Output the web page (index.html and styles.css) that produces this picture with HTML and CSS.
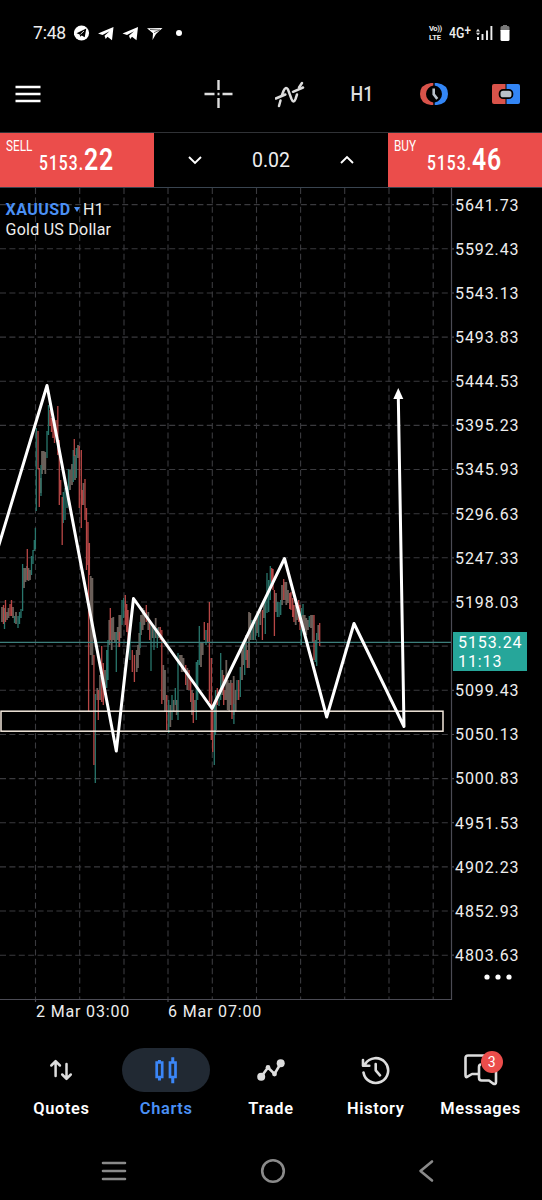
FILE: index.html
```html
<!DOCTYPE html>
<html lang="en">
<head>
    <meta charset="UTF-8">
    <meta name="viewport" content="width=device-width, initial-scale=1.0">
    <title>XAUUSD Chart</title>
    <link rel="stylesheet" href="styles.css">
</head>
<body>
    <header class="status-bar">
        <span class="clock">7:48</span>
        <svg class="status-icons" width="108" height="18" viewBox="0 0 108 18">
            <circle cx="7.5" cy="9" r="7.6" fill="#fff"/>
            <path d="M2.5 9.2 12.3 4.5 10.7 13.3 7.7 11.4 6.2 12.8 5.7 10.4Z" fill="#000"/>
            <path d="m6.5 10.3 3.5-3.3" stroke="#fff" stroke-width=".8"/>
            <path d="M24 9.6 39.5 3 38 16.2 33.5 12.7 31.7 15 30.5 11.7 35.5 7.2 28.5 11Z" fill="#fff"/>
            <path d="M48.5 9.6 64 3 62.5 16.2 58 12.7 56.2 15 55 11.7 60 7.2 53 11Z" fill="#fff"/>
            <path d="M73 4.2 88.5 4 82 10 78.5 16 79 9.3Z" fill="#fff"/>
            <path d="m76 5.5 10 .5-6 2.6" fill="none" stroke="#555" stroke-width=".9"/>
            <circle cx="105" cy="9" r="3" fill="#fff"/>
        </svg>
        <div class="signal">
            <span class="volte"><span>Vo))</span><span>LTE</span></span>
            <span class="network">4G<sup>+</sup></span>
            <svg width="17" height="16" viewBox="0 0 17 16">
                <path d="M6.5 9v6M11 5.5V15M15.4 1v14" stroke="#eee" stroke-width="1.9"/>
                <path d="M2 12v3" stroke="#eee" stroke-width="2"/>
                <path d="m0 6.500 2-2.800 2 2.800ZM0 7.800h4l-2 2.800Z" fill="#ddd"/>
            </svg>
            <svg width="10" height="18" viewBox="0 0 10 18">
                <path d="M3 1h4v1h1q1.5 0 1.5 1.5V7h-9V3.5Q.5 2 2 2h1Z" fill="#777"/>
                <path d="M.5 6h9v9.5Q9.5 17 8 17H2Q.5 17 .5 15.5Z" fill="#fff"/>
            </svg>
        </div>
    </header>

    <nav class="toolbar">
        <svg class="menu" width="26" height="20" viewBox="0 0 26 20">
            <path d="M.5 3h25M.5 10h25M.5 17h25" stroke="#fff" stroke-width="2.7"/>
        </svg>
        <div class="tools">
            <svg width="30" height="30" viewBox="0 0 30 30">
                <path d="M15.500 1v10M15.500 19v10M1.500 15h10M19.500 15h10M14.500 15h2" stroke="#ddd" stroke-width="2.4"/>
            </svg>
            <svg width="30" height="30" viewBox="0 0 30 30" fill="none" stroke="#ddd" stroke-width="2.5" stroke-linecap="round">
                <path d="M4 27 5.500 21.500M7 16 8.500 12Q10.500 7 13 10.500L16.500 20Q18.500 25 20.500 20L22 15.500M24 8.500 27 4"/>
                <path d="m.8 19.500 9.500-4M18 12.800l10-4.300"/>
            </svg>
            <span class="timeframe">H1</span>
            <svg width="30" height="30" viewBox="0 0 30 30">
                <path d="M14.300 4H12Q1 5.500 1 15T12 26h2.300V23.500A8.600 8.600 0 0 1 14.300 6.500Z" fill="#d9534a"/>
                <path d="M15.700 4H18Q29 5.500 29 15T18 26h-2.300V23.500A8.600 8.600 0 0 0 15.700 6.500Z" fill="#3386f6"/>
                <path d="M14.700 9.500v5.700l3.600 4.700" fill="none" stroke="#b9c2ca" stroke-width="2.6"/>
            </svg>
            <svg width="30" height="30" viewBox="0 0 30 30">
                <path d="M3 5h11.500v20H3Q1 25 1 23V7Q1 5 3 5Z" fill="#d9534a"/>
                <path d="M15.500 5H27q2 0 2 2v16q0 2-2 2H15.500Z" fill="#3386f6"/>
                <rect x="8.600" y="10.800" width="12.800" height="8.400" rx="3.500" fill="#b9c2ca" stroke="#000" stroke-width="1.8"/>
            </svg>
        </div>
    </nav>

    <section class="trade-panel">
        <div class="quote sell">
            <span class="side">SELL</span>
            <span class="price">5153.<b>22</b></span>
        </div>
        <div class="volume">
            <svg width="16" height="10" viewBox="0 0 16 10"><path d="m2 2 6 6 6-6"/></svg>
            <span>0.02</span>
            <svg width="16" height="10" viewBox="0 0 16 10"><path d="m2 8 6-6 6 6"/></svg>
        </div>
        <div class="quote buy">
            <span class="side">BUY</span>
            <span class="price">5153.<b>46</b></span>
        </div>
    </section>

    <main class="chart">
        <div class="plot">
            <svg class="canvas" width="454" height="814" viewBox="0 188 454 814">
                <!-- grid -->
                <path class="grid" d="M35.500 188V999M79.700 188V999M124 188V999M168 188V999M212.300 188V999M256.500 188V999M300.600 188V999M344.700 188V999M389 188V999M433.200 188V999"/>
                <path class="grid" d="M0 204.600H451M0 248.800H451M0 293H451M0 337.100H451M0 381.300H451M0 425.400H451M0 469.500H451M0 513.700H451M0 557.800H451M0 602H451M0 646.100H451M0 690.300H451M0 734.500H451M0 778.600H451M0 822.700H451M0 866.900H451M0 911H451M0 955.200H451"/>
                <path class="ticks" d="M451.500 204.600h3M451.500 248.800h3M451.500 293h3M451.500 337.100h3M451.500 381.300h3M451.500 425.400h3M451.500 469.500h3M451.500 513.700h3M451.500 557.800h3M451.500 602h3M451.500 690.300h3M451.500 734.500h3M451.500 778.600h3M451.500 822.700h3M451.500 866.900h3M451.500 911h3M451.500 955.200h3M35.500 999v3M168 999v3"/>
                <path class="frame" d="M451.500 188V999.500H0"/>

                <!-- price bars -->
                <path class="bar mixed" d="M2 607V622M7 612V620M8.500 608V618M13 607V618M16 612V624M24 568V588M25.500 568V582M28.500 568V581M30 570V580M40.700 478V493M42 451V474M43.700 451V470M45.300 452V474M70 470V490M72 464V485M75 455V480M78 445V458M83.500 483V505M90.700 576V655M92.400 578V665M97.300 688V700M100 675V700M105 670V690M109.300 620V645M111.700 618V650M113.300 617V640M115 632V643M117.700 627V640M119.300 615V647M120.700 615V638M136.700 650V672M138 645V668M139.300 633V655M141 615V635M142.700 608V630M144.300 610V625M148.300 612V630M152.700 625V638M155.700 618V638M158.700 627V638M163.300 665V700M165 670V712M170.300 705V727M173.700 700V712M176.700 700V715M180 655V665M181.700 655V672M183.500 658V672M187.300 668V690M192 690V715M195 700V710M201 642V667M202.700 642V655M216 700V730M222.300 670V695M225 690V700M226.300 660V700M227.700 680V710M229.300 683V712M230.700 680V705M233.700 676V715M235.700 690V712M242 650V680M243.300 645V665M246 635V660M249 612V668M250.300 613V640M253.300 625V640M257 616V633M260.300 610V625M264 600V618M276 593V612M282 585V605M285 582V600M286.300 582V605M288 590V603M295.700 605V625M297 610V620M303 615V625M304.700 615V630M306.300 618V635M308 620V630M311 615V628M312.700 615V643M318.300 625V640"/>
                <path class="bar up" d="M4.500 608V629M14.500 616V623M18 616V628M19.500 612V624M21 609V618M22.600 564V611M26.800 566V580M31.500 556V575M33 550V564M34.300 540V551M35.400 528V549M36.300 428V511M41 465V496M47 431V458M48.500 405V435M63.300 492V523M65 488V520M67 486V508M68.500 469V495M73.300 450V482M76.300 448V478M95.300 694V783M106.700 650V688M108 640V680M116.300 632V672M122 600V625M123.700 598V618M130 620V660M140.200 622V648M151 625V671M154 625V650M157.300 628V648M168.700 700V733M172 695V720M175.300 688V705M178 653V720M196.300 662V720M197.700 660V700M199.300 626V665M206 630V645M214.300 705V765M215.500 690V735M219 694V706M220.700 653V700M233.900 704V724M237 680V700M240.300 667V697M244.700 640V675M252 620V640M255.300 622V640M258.700 615V637M265.300 600V634M267 573V613M268.700 580V612M270.300 566V600M277.300 602V617M279 602V617M280.700 600V615M301.300 608V645M303 604V615M309.300 616V627M315.300 640V662M316.700 633V666"/>
                <path class="bar down" d="M3.500 605V624M5.500 600V622M10 604V616M11.500 600V616M27.300 549V580M38 431V469M39.300 468V507M50 410V426M51.500 418V432M53 420V438M54.500 425V443M56 420V432M57.800 406V455M59.300 440V505M60.700 480V495M62.200 497V545M74.300 439V456M79.300 446V508M81.300 450V528M82.300 490V505M85 479V520M86.500 508V570M88 522V565M89.400 543V575M88.600 560V712M93.900 655V765M98.300 690V720M101.700 646V702M103.300 663V705M110.300 608V640M125.300 595V625M126.700 604V632M128 610V645M119.400 632V647M132.300 650V672M134.400 655V682M146.300 605V622M149.700 620V640M160.300 627V640M161.800 630V704M166.700 695V730M185.700 665V685M189 670V690M190.700 680V702M193.300 693V723M204.300 622V640M207.700 623V643M209.400 602V702M211.300 658V740M212.700 705V752M217.300 688V705M223.700 675V705M232 683V719M238.700 680V700M247.300 650V668M262.400 610V640M271.700 568V582M273 569V590M274.400 590V636M283.700 579V600M289.700 593V609M291 592V610M292.700 598V617M294 605V622M298.700 600V622M300 605V630M314 615V660M319.700 623V646"/>

                <!-- current price -->
                <path d="M0 642.300H451" stroke="#3d7f7c" stroke-width="1.3"/>

                <!-- support zone and projection -->
                <rect class="zone" x="1" y="711.200" width="442" height="20"/>
                <path class="trend" d="M-2 548 47 385.500 116.300 751 133.500 598.500 212 708.500 284.500 558.500 326.700 717 354 623.500 404 726.500 398.300 397"/>
                <path d="m398.300 388 5 11h-10Z" fill="#fff"/>
            </svg>
            <div class="symbol">
                <div><b>XAUUSD</b> <i></i> H1</div>
                <div>Gold US Dollar</div>
            </div>
        </div>
        <aside class="price-axis">
            <span>5641.73</span>
            <span>5592.43</span>
            <span>5543.13</span>
            <span>5493.83</span>
            <span>5444.53</span>
            <span>5395.23</span>
            <span>5345.93</span>
            <span>5296.63</span>
            <span>5247.33</span>
            <span>5198.03</span>
            <div class="current">
                <div class="tag">5153.24<br>11:13</div>
            </div>
            <span>5099.43</span>
            <span>5050.13</span>
            <span>5000.83</span>
            <span>4951.53</span>
            <span>4902.23</span>
            <span>4852.93</span>
            <span>4803.63</span>
            <svg class="more" width="30" height="6" viewBox="0 0 30 6" fill="#fff">
                <circle cx="4" cy="3" r="2.6"/>
                <circle cx="15" cy="3" r="2.6"/>
                <circle cx="26" cy="3" r="2.6"/>
            </svg>
        </aside>
    </main>

    <div class="time-axis">
        <span>2 Mar 03:00</span>
        <span>6 Mar 07:00</span>
    </div>

    <nav class="tabs">
        <a class="tab">
            <span class="pill">
                <svg width="28" height="28" viewBox="0 0 28 28" fill="none" stroke="#ddd" stroke-width="2.5" stroke-linecap="round" stroke-linejoin="round">
                    <path d="M8.600 20V5.500M4.300 9.500l4.300-4.300 4.300 4.300M19.500 8v14.500M15.200 18.500l4.300 4.300 4.300-4.300"/>
                </svg>
            </span>
            <span class="label">Quotes</span>
        </a>
        <a class="tab active">
            <span class="pill">
                <svg width="28" height="28" viewBox="0 0 28 28" fill="none" stroke="#3b86f7" stroke-width="2.7">
                    <path d="M4.700 6.500h5.500v14.500H4.700ZM18 6.500h5.500v14.500H18Z"/>
                    <path d="M7.450 4v3M7.450 21v3.500M20.750 1.300V7M20.750 21v6.300" stroke-width="3"/>
                </svg>
            </span>
            <span class="label">Charts</span>
        </a>
        <a class="tab">
            <span class="pill">
                <svg width="28" height="28" viewBox="0 0 28 28">
                    <path d="m4 21 7-9.500 6.500 6.500 6.500-11" fill="none" stroke="#ddd" stroke-width="2.6"/>
                    <g fill="#ddd">
                        <circle cx="4.200" cy="20.800" r="4"/>
                        <circle cx="11" cy="11.500" r="2.4"/>
                        <circle cx="17.500" cy="18" r="2.4"/>
                        <circle cx="23.700" cy="7.200" r="4"/>
                    </g>
                </svg>
            </span>
            <span class="label">Trade</span>
        </a>
        <a class="tab">
            <span class="pill">
                <svg width="30" height="30" viewBox="0 0 30 30" fill="none" stroke="#ddd" stroke-width="2.6" stroke-linecap="round" stroke-linejoin="round">
                    <path d="M2.500 17.500A12.400 12.400 0 1 0 4.200 9M2 5v5.800h6.300M14.700 9v6.300l4.300 5"/>
                </svg>
            </span>
            <span class="label">History</span>
        </a>
        <a class="tab">
            <span class="pill">
                <svg width="36" height="34" viewBox="0 0 36 34" fill="none" stroke="#ddd" stroke-width="2.6" stroke-linejoin="round">
                    <path d="M15.500 21H9L4.500 23.700Q2.500 25 2.500 22V5Q2.500 2.500 5 2.500H24M18 11.500Q16 11.500 16 14V24.500Q16 27.500 18.500 27.500H26L30 30.500Q33 32 33 29V14"/>
                </svg>
                <span class="badge">3</span>
            </span>
            <span class="label">Messages</span>
        </a>
    </nav>

    <footer class="system-nav">
        <svg width="26" height="20" viewBox="0 0 26 20"><path d="M2 2h22M2 10h22M2 18h22"/></svg>
        <svg width="26" height="26" viewBox="0 0 26 26"><circle cx="13" cy="13" r="10.8"/></svg>
        <svg width="16" height="24" viewBox="0 0 16 24"><path d="M14 2.500 2.500 12 14 21.500"/></svg>
    </footer>
</body>
</html>
```
FILE: styles.css
```css
* {
    margin: 0;
    padding: 0;
    box-sizing: border-box;
}

body {
    width: 542px;
    height: 1200px;
    display: flex;
    flex-direction: column;
    overflow: hidden;
    background-color: #000;
    color: #eee;
    font-family: Roboto, "Liberation Sans", sans-serif;
}

svg {
    display: block;
    flex-shrink: 0;
}

/* status bar */
.status-bar {
    height: 66px;
    padding: 0 32px 0 33px;
    display: flex;
    align-items: center;
}

.clock {
    width: 41px;
    font-size: 17.5px;
    letter-spacing: -0.2px;
}

.signal {
    margin-left: auto;
    display: flex;
    align-items: center;
}

.volte {
    display: flex;
    flex-direction: column;
    gap: 1px;
    width: 20px;
    font-size: 7.5px;
    line-height: 8px;
    font-weight: 700;
}

.volte span:first-child {
    letter-spacing: -0.4px;
}

.network {
    width: 27px;
    font-size: 15px;
    line-height: 18px;
    font-weight: 500;
    transform: scaleX(0.82);
    transform-origin: left;
}

.network sup {
    font-size: 14px;
    line-height: 0;
    vertical-align: 3px;
}

.signal svg:last-child {
    margin-left: 7px;
}

/* toolbar */
.toolbar {
    height: 66px;
    padding: 0 21px 11px 15px;
    display: flex;
    align-items: center;
    justify-content: space-between;
}

.tools {
    display: flex;
    gap: 42px;
}

.timeframe {
    width: 30px;
    line-height: 30px;
    text-align: center;
    font-size: 20.5px;
    font-weight: 500;
    color: #ddd;
    transform: scaleX(0.87);
}

/* one-click trading */
.trade-panel {
    height: 56px;
    display: grid;
    grid-template-columns: 154px 1fr 154px;
    border-top: 1px solid #303236;
    border-bottom: 1px solid #394450;
}

.quote {
    background-color: #eb4d4b;
    padding: 5px 0 0 6px;
    color: #fff;
}

.side {
    display: block;
    width: 50px;
    height: 14px;
    font-size: 14px;
    line-height: 16px;
    transform: scaleX(0.84);
    transform-origin: left;
}

.price {
    display: block;
    width: 110px;
    height: 24px;
    margin: -7px 0 0 33px;
    font-size: 19.5px;
    line-height: 30px;
    font-weight: 500;
    transform: scaleX(0.8);
    transform-origin: left;
    letter-spacing: 1.3px;
}

.price b {
    font-size: 31px;
    font-weight: 600;
    letter-spacing: 0.9px;
}

.volume {
    padding: 0 33px;
    display: flex;
    align-items: center;
    justify-content: space-between;
    font-size: 19.5px;
}

.volume path {
    fill: none;
    stroke: #fff;
    stroke-width: 1.9;
}

/* chart */
.chart {
    height: 812px;
    display: flex;
}

.plot {
    width: 452px;
    position: relative;
}

.grid {
    stroke: #3a3a3e;
    stroke-width: 1.1;
    stroke-dasharray: 6 3.4;
}

.ticks,
.frame {
    fill: none;
    stroke: #4b4b54;
    stroke-width: 1.2;
}

.bar {
    stroke-width: 1.3;
}

.bar.up {
    stroke: #28766c;
}

.bar.down {
    stroke: #b84746;
}

.bar.mixed {
    stroke: #6a5f59;
    stroke-width: 1.8;
}

.zone {
    fill: none;
    stroke: #f3e8dc;
    stroke-width: 1.5;
}

.trend {
    fill: none;
    stroke: #fff;
    stroke-width: 3;
    stroke-linejoin: round;
}

/* symbol caption lies over the plot */
.symbol {
    position: absolute;
    top: 11.5px;
    left: 5.5px;
    font-size: 16px;
    line-height: 20.5px;
    letter-spacing: 0.25px;
}

.symbol b {
    color: #4a90f5;
    font-weight: 700;
    letter-spacing: 0.5px;
}

.symbol i {
    display: inline-block;
    border: 3px solid transparent;
    border-top: 5px solid #4a90f5;
    border-bottom: 0;
    margin: 0 -1px 3px -1px;
}

.price-axis {
    flex: 1;
    display: flex;
    flex-direction: column;
    margin-top: -4.4px;
    padding-left: 3px;
    font-size: 16px;
    letter-spacing: 0.9px;
}

.price-axis > span,
.current {
    height: 44.15px;
    line-height: 44.15px;
    flex-shrink: 0;
}

.current {
    padding-top: 6.9px;
}

.tag {
    width: 74px;
    height: 39px;
    margin-left: -2px;
    padding: 1px 0 0 5px;
    background-color: #26a69a;
    color: #fff;
    line-height: 19px;
}

.more {
    margin: -4px 0 0 28px;
}

.time-axis {
    height: 36px;
    padding-left: 36px;
    display: flex;
    font-size: 16px;
    line-height: 23px;
    letter-spacing: 0.85px;
}

.time-axis span {
    width: 132px;
}

/* bottom tabs */
.tabs {
    height: 94px;
    padding: 12px 9px 0;
    display: grid;
    grid-template-columns: repeat(5, 1fr);
}

.tab {
    display: flex;
    flex-direction: column;
    align-items: center;
}

.pill {
    width: 88px;
    height: 44px;
    display: flex;
    align-items: center;
    justify-content: center;
    border-radius: 22px;
    position: relative;
}

.active .pill {
    background-color: #212933;
}

.label {
    margin-top: 7px;
    font-size: 16.4px;
    line-height: 20px;
    font-weight: 600;
    letter-spacing: 0.65px;
    color: #fff;
}

.active .label {
    color: #4a90f5;
}

.badge {
    position: absolute;
    top: 3px;
    left: 44px;
    width: 22px;
    height: 22px;
    border-radius: 50%;
    background-color: #eb4d4b;
    color: #fff;
    font-size: 14px;
    line-height: 22px;
    text-align: center;
}

.system-nav {
    flex: 1;
    display: flex;
    align-items: center;
    justify-content: space-between;
    padding: 12px 108px 0 101px;
}

.system-nav svg {
    fill: none;
    stroke: #8a8a8a;
    stroke-width: 2.6;
    stroke-linecap: round;
    stroke-linejoin: round;
}
```
